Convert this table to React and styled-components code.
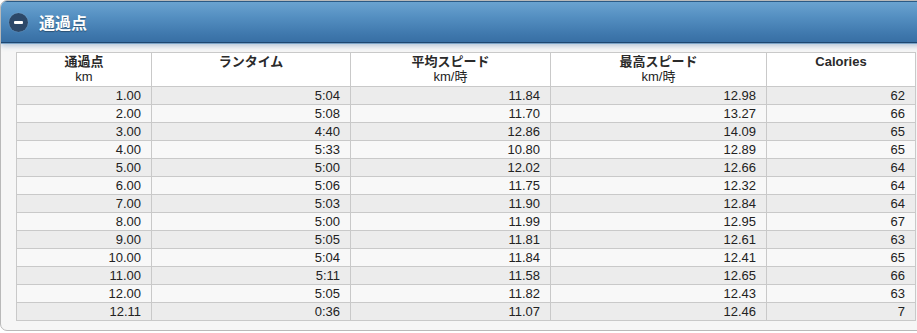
import React from "react";
import styled, { createGlobalStyle } from "styled-components";

const GlobalStyle = createGlobalStyle`
  html, body {
    margin: 0;
    padding: 0;
    background: #ffffff;
    overflow: hidden;
  }
  body {
    font-family: "Liberation Sans", "Noto Sans CJK JP", sans-serif;
  }
`;

const splits = [
  ["1.00", "5:04", "11.84", "12.98", "62"],
  ["2.00", "5:08", "11.70", "13.27", "66"],
  ["3.00", "4:40", "12.86", "14.09", "65"],
  ["4.00", "5:33", "10.80", "12.89", "65"],
  ["5.00", "5:00", "12.02", "12.66", "64"],
  ["6.00", "5:06", "11.75", "12.32", "64"],
  ["7.00", "5:03", "11.90", "12.84", "64"],
  ["8.00", "5:00", "11.99", "12.95", "67"],
  ["9.00", "5:05", "11.81", "12.61", "63"],
  ["10.00", "5:04", "11.84", "12.41", "65"],
  ["11.00", "5:11", "11.58", "12.65", "66"],
  ["12.00", "5:05", "11.82", "12.43", "63"],
  ["12.11", "0:36", "11.07", "12.46", "7"],
];

const columns = [
  { width: 135, title: "通過点", unit: "km" },
  { width: 199, title: "ランタイム" },
  { width: 200, title: "平均スピード", unit: "km/時" },
  { width: 216, title: "最高スピード", unit: "km/時" },
  { width: 149, title: "Calories" },
];

const Panel = styled.section`
  width: 940px;
  height: 331px;
  box-sizing: border-box;
  border: 1px solid #b9b9b9;
  border-radius: 7px;
  background: #f6f6f6;
  overflow: hidden;
`;

const PanelHeader = styled.header`
  height: 40px;
  display: flex;
  align-items: center;
  gap: 11px;
  padding-left: 8px;
  border-top: 1px solid #2b5a85;
  border-bottom: 1px solid #1d4670;
  background: linear-gradient(to bottom, #6aa3d0 0%, #5590c2 35%, #3f78ad 80%, #386fa4 100%);
  box-shadow: 0 1px 0 #7aa2c6, 0 3px 5px rgba(60, 110, 160, 0.35);
`;

const ToggleIcon = styled.span`
  width: 19px;
  height: 19px;
  border-radius: 50%;
  background: #2c4869;
  box-shadow: 0 0 1px rgba(255, 255, 255, 0.4);
  display: flex;
  align-items: center;
  justify-content: center;

  &::before {
    content: "";
    width: 9px;
    height: 3px;
    border-radius: 1px;
    background: #ffffff;
  }
`;

const PanelTitle = styled.h2`
  margin: 0;
  color: #ffffff;
  font-family: "Noto Sans CJK JP", sans-serif;
  font-size: 16px;
  font-weight: 700;
  text-shadow: 0 1px 1px rgba(0, 0, 0, 0.35);
`;

const PanelBody = styled.div`
  padding: 9px 0 0 15px;
`;

const Table = styled.table`
  border-collapse: collapse;
  table-layout: fixed;
  width: 900px;
  font-size: 13px;
  color: #222;
`;

const HeadCell = styled.th`
  width: ${(p) => p.$width}px;
  height: 34px;
  box-sizing: border-box;
  padding: 0 10px;
  vertical-align: top;
  text-align: center;
  background: #ffffff;
  border: 1px solid #c9c9c9;
  font-weight: 400;
  line-height: 15px;
`;

const HeadTitle = styled.div`
  font-family: "Liberation Sans", "Noto Sans CJK JP", sans-serif;
  font-weight: 700;
  color: #2a2a2a;
  padding-top: 1px;
`;

const HeadUnit = styled.div`
  font-family: "Liberation Sans", "Noto Sans CJK JP", sans-serif;
  font-size: 13px;
  color: #222;
`;

const Row = styled.tr`
  background: ${(p) => (p.$odd ? "#ececec" : "#f8f8f8")};
`;

const Cell = styled.td`
  height: 17px;
  padding: 0 10px;
  line-height: 17px;
  text-align: right;
  border: 1px solid #c9c9c9;
  white-space: nowrap;
`;

export default function App() {
  return (
    <>
      <GlobalStyle />
      <Panel>
        <PanelHeader>
          <ToggleIcon />
          <PanelTitle>通過点</PanelTitle>
        </PanelHeader>
        <PanelBody>
          <Table>
            <thead>
              <tr>
                {columns.map((c) => (
                  <HeadCell key={c.title} $width={c.width}>
                    <HeadTitle>{c.title}</HeadTitle>
                    {c.unit && <HeadUnit>{c.unit}</HeadUnit>}
                  </HeadCell>
                ))}
              </tr>
            </thead>
            <tbody>
              {splits.map((row, i) => (
                <Row key={row[0]} $odd={i % 2 === 0}>
                  {row.map((v, j) => (
                    <Cell key={j}>{v}</Cell>
                  ))}
                </Row>
              ))}
            </tbody>
          </Table>
        </PanelBody>
      </Panel>
    </>
  );
}
